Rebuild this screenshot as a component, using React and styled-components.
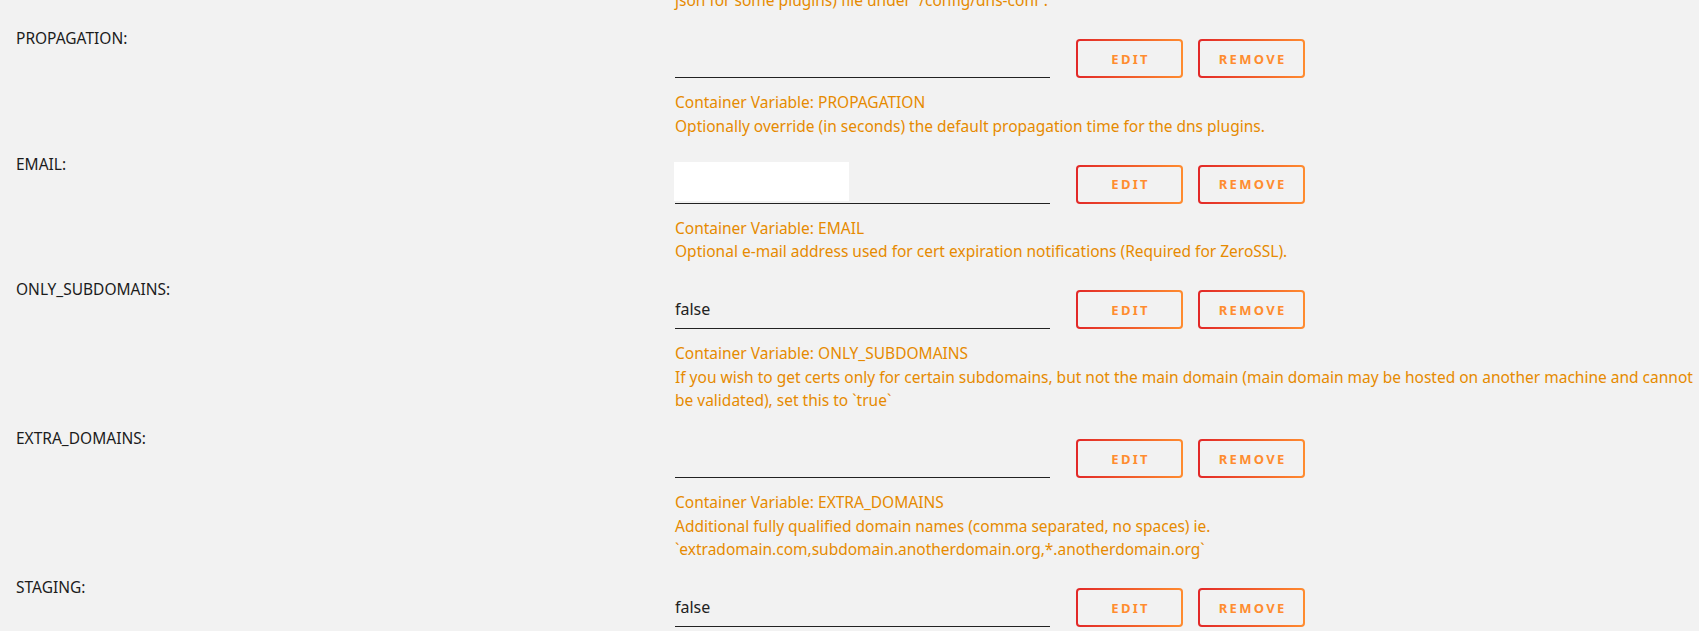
import styled, { createGlobalStyle } from "styled-components";

const GlobalStyle = createGlobalStyle`
  html, body {
    margin: 0;
    padding: 0;
    background: #f2f2f2;
    overflow: hidden;
  }
  body {
    font-family: "Noto Sans", "Open Sans", sans-serif;
    font-size: 15.5px;
    color: #1c1c1c;
  }
`;

const vars = [
  {
    name: "PROPAGATION",
    value: "",
    hint: "Optionally override (in seconds) the default propagation time for the dns plugins.",
  },
  {
    name: "EMAIL",
    value: "",
    hidden: true,
    hint: "Optional e-mail address used for cert expiration notifications (Required for ZeroSSL).",
  },
  {
    name: "ONLY_SUBDOMAINS",
    value: "false",
    hint: "If you wish to get certs only for certain subdomains, but not the main domain (main domain may be hosted on another machine and cannot be validated), set this to `true`",
  },
  {
    name: "EXTRA_DOMAINS",
    value: "",
    hint: "Additional fully qualified domain names (comma separated, no spaces) ie. `extradomain.com,subdomain.anotherdomain.org,*.anotherdomain.org`",
  },
  {
    name: "STAGING",
    value: "false",
    hint: "Set to true to retrieve certs in staging mode.",
  },
];

export default function App() {
  return (
    <>
      <GlobalStyle />
      <Page>
        <Row>
          <span />
          <Hint $tail>json for some plugins) file under `/config/dns-conf`.</Hint>
        </Row>
        {vars.map((v) => (
          <Row key={v.name}>
            <Label>{v.name}:</Label>
            <Content>
              <Controls>
                <Field>
                  {v.hidden && <Redacted />}
                  {!v.hidden && v.value}
                </Field>
                <Button>Edit</Button>
                <Button>Remove</Button>
              </Controls>
              <Hint>
                Container Variable: {v.name}
                <br />
                {v.hint}
              </Hint>
            </Content>
          </Row>
        ))}
      </Page>
    </>
  );
}

const Page = styled.div`
  display: flex;
  flex-direction: column;
  height: 643px;
  margin-top: -11px;
  padding: 0 0 0 16px;
  overflow: hidden;
`;

const Row = styled.div`
  display: grid;
  grid-template-columns: 659px 1fr;
  padding-bottom: 13.5px;
`;

const Label = styled.div`
  line-height: 24px;
  white-space: nowrap;
`;

const Content = styled.div`
  display: flex;
  flex-direction: column;
`;

const Controls = styled.div`
  display: flex;
  align-items: flex-start;
  gap: 15px;
  margin-top: 13px;
  height: 39px;
`;

const Field = styled.div`
  display: flex;
  align-items: center;
  width: 375px;
  height: 38px;
  margin-right: 11px;
  border-bottom: 1px solid #222;
  font-size: 16px;
  color: #222;
`;

const Redacted = styled.span`
  align-self: flex-start;
  width: 175px;
  height: 39px;
  margin: -3px 0 0 -1px;
  background: #fff;
`;

const Button = styled.button`
  width: 107px;
  height: 39px;
  padding: 0;
  border: 2px solid transparent;
  border-radius: 4px;
  background: linear-gradient(#f2f2f2, #f2f2f2) padding-box,
    linear-gradient(90deg, #e22828, #ff8c2f) border-box;
  color: #ff8c2f;
  font-family: "Noto Sans", sans-serif;
  font-size: 13px;
  font-weight: 700;
  letter-spacing: 2.3px;
  text-transform: uppercase;
  text-indent: 2.3px;
`;

const Hint = styled.div`
  margin-top: ${(p) => (p.$tail ? "0" : "13px")};
  line-height: 23.5px;
  color: #e68a00;
`;
